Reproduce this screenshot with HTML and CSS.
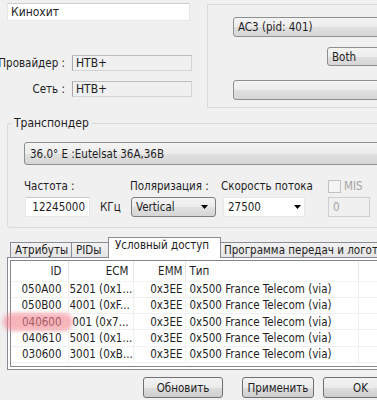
FILE: index.html
```html
<!DOCTYPE html>
<html lang="ru">
<head>
    <meta charset="UTF-8">
    <meta name="viewport" content="width=device-width, initial-scale=1.0">
    <title>Канал - Кинохит</title>
    <link rel="stylesheet" href="styles.css">
</head>
<body>

<div class="window">

    <section class="top">
        <div class="ident">
            <input class="name-input" type="text" value="Кинохит">
            <div class="info-row first">
                <span class="info-label">Провайдер :</span>
                <span class="info-field">НТВ+</span>
            </div>
            <div class="info-row">
                <span class="info-label">Сеть :</span>
                <span class="info-field">НТВ+</span>
            </div>
        </div>

        <div class="audio">
            <div class="combo audio-track">AC3 (pid: 401)</div>
            <div class="combo channels">Both</div>
            <div class="combo audio-bar"></div>
        </div>
    </section>

    <fieldset class="transponder">
        <legend>Транспондер</legend>
        <div class="combo satellite">36.0° E :Eutelsat 36A,36B</div>

        <div class="params">
            <div class="param">
                <span class="param-label">Частота :</span>
                <div class="param-line">
                    <input class="text-input freq" type="text" value="12245000">
                    <span class="unit">КГц</span>
                </div>
            </div>
            <div class="param">
                <span class="param-label">Поляризация :</span>
                <div class="combo polar">Vertical
                    <svg class="arrow" width="7" height="4" viewBox="0 0 7 4"><path d="M0 0h7L3.5 4z"/></svg>
                </div>
            </div>
            <div class="param">
                <span class="param-label">Скорость потока</span>
                <div class="edit-combo speed">27500
                    <svg class="arrow" width="7" height="4" viewBox="0 0 7 4"><path d="M0 0h7L3.5 4z"/></svg>
                </div>
            </div>
            <div class="param">
                <span class="param-label mis-label"><span class="check"></span>MIS</span>
                <input class="text-input mis" type="text" value="0" disabled>
            </div>
        </div>
    </fieldset>

    <nav class="tabs">
        <span class="tab tab-attr">Атрибуты</span>
        <span class="tab tab-pid">PIDы</span>
        <span class="tab active">Условный доступ</span>
        <span class="tab">Программа передач и логотип</span>
    </nav>

    <section class="tab-page">
        <div class="list">
            <table>
                <thead>
                    <tr>
                        <th class="col-id">ID</th>
                        <th class="col-ecm">ECM</th>
                        <th class="col-emm">EMM</th>
                        <th class="col-type">Тип</th>
                        <th></th>
                    </tr>
                </thead>
                <tbody id="ca-rows"></tbody>
            </table>
        </div>
    </section>

    <div class="actions">
        <button class="btn refresh">Обновить</button>
        <button class="btn apply">Применить</button>
        <button class="btn ok">OK</button>
    </div>

    <!-- marker stroke over the third id -->
    <div class="marker"></div>
</div>

<script>
    const caSystems = [
        { id: '050A00', ecm: '5201 (0x1...', emm: '0x3EE', type: '0x500 France Telecom (via)' },
        { id: '050B00', ecm: '4001 (0xF...', emm: '0x3EE', type: '0x500 France Telecom (via)' },
        { id: '040600', ecm: '001 (0x7...', emm: '0x3EE', type: '0x500 France Telecom (via)' },
        { id: '040610', ecm: '5001 (0x1...', emm: '0x3EE', type: '0x500 France Telecom (via)' },
        { id: '030600', ecm: '3001 (0xB...', emm: '0x3EE', type: '0x500 France Telecom (via)' }
    ];

    const tbody = document.getElementById('ca-rows');
    caSystems.forEach(item => {
        const row = document.createElement('tr');
        row.innerHTML = `
            <td class="col-id">${item.id}</td>
            <td class="col-ecm">${item.ecm}</td>
            <td class="col-emm">${item.emm}</td>
            <td class="col-type">${item.type}</td>
            <td></td>
        `;
        tbody.appendChild(row);
    });
</script>

</body>
</html>
```

FILE: styles.css
```css
body {
    margin: 0;
    width: 377px;
    height: 400px;
    overflow: hidden;
    background-color: #f0f0f0;
    font-family: "DejaVu Sans Condensed", "Liberation Sans", sans-serif;
    font-size: 11.5px;
    color: #1e1e1e;
}
.window {
    position: relative;
    width: 440px;
}

/* top block */
.top {
    display: flex;
    height: 108px;
}
.ident {
    width: 207px;
    padding-top: 3px;
}
.name-input {
    display: block;
    margin-left: 7px;
    width: 183px;
    height: 18px;
    box-sizing: border-box;
    border: 1px solid #e6e6e6;
    border-top-color: #cfcfcf;
    background-color: #fff;
    font: inherit;
    font-size: 12px;
    color: #1e1e1e;
    padding: 0 3px;
    outline: none;
}
.info-row {
    display: flex;
    align-items: center;
    margin-top: 10px;
}
.info-row.first {
    margin-top: 34px;
}
.info-label {
    display: flex;
    justify-content: flex-end;
    width: 65px;
    margin-right: 7px;
    white-space: nowrap;
}
.info-field {
    width: 120px;
    height: 16px;
    box-sizing: border-box;
    border: 1px solid #d4d4d4;
    border-left-color: #a9a9a9;
    border-top-color: #bdbdbd;
    padding-left: 3px;
    line-height: 14px;
    font-size: 12px;
}
.audio {
    flex: 1;
    margin-top: 4px;
    height: 104px;
    box-sizing: border-box;
    border: 1px solid #dadada;
    border-right: none;
    padding: 12px 0 0 25px;
}

/* drop-down lists */
.combo {
    display: flex;
    align-items: center;
    box-sizing: border-box;
    border: 1px solid #8e8f8f;
    border-radius: 3px;
    background: linear-gradient(#f4f4f4, #ececec 50%, #e0e0e0 51%, #d6d6d6);
    padding: 0 4px;
    white-space: nowrap;
}
.audio-track {
    width: 200px;
    height: 20px;
}
.channels {
    margin: 10px 0 0 94px;
    width: 90px;
    height: 19px;
}
.audio-bar {
    margin-top: 14px;
    width: 200px;
    height: 20px;
}
.arrow {
    margin-left: auto;
    margin-right: 3px;
    fill: #000;
}

/* transponder group */
.transponder {
    margin: 8px 0 0 7px;
    padding: 0 0 10px 16px;
    border: 1px solid #d5dbe0;
    border-radius: 3px;
    min-width: 0;
}
.transponder legend {
    margin-left: -12px;
    padding: 0 2px;
    line-height: 14px;
    font-size: 12px;
}
.satellite {
    margin-top: 12px;
    width: 420px;
    height: 23px;
    padding-left: 5px;
}
.params {
    display: grid;
    grid-template-columns: 106px 91px 106px 60px;
    margin-top: 13px;
}
.param {
    display: flex;
    flex-direction: column;
    gap: 3px;
}
.param-label {
    height: 16px;
    line-height: 16px;
    white-space: nowrap;
}
.param-line {
    display: flex;
    align-items: center;
}
.text-input {
    height: 20px;
    box-sizing: border-box;
    border: 1px solid #e3e9ef;
    border-top-color: #c5c9ce;
    background-color: #fff;
    font: inherit;
    color: #1e1e1e;
    outline: none;
}
.freq {
    margin-left: 1px;
    width: 65px;
    text-align: right;
    padding: 0 4px 0 0;
}
.unit {
    margin-left: 10px;
}
.polar {
    margin-left: 1px;
    width: 85px;
    height: 20px;
    border-color: #7f7f7f;
}
.edit-combo {
    display: flex;
    align-items: center;
    margin-left: 2px;
    width: 82px;
    height: 20px;
    box-sizing: border-box;
    border: 1px solid #e3e9ef;
    background-color: #fff;
    padding-left: 4px;
}
.mis-label {
    display: flex;
    align-items: center;
    gap: 3px;
    color: #a3a3a3;
    margin-left: 1px;
}
.check {
    width: 13px;
    height: 13px;
    box-sizing: border-box;
    border: 1px solid #c2c2c2;
    background-color: #f4f4f4;
}
.mis {
    margin-left: 1px;
    width: 42px;
    border: 1px solid #cfcfcf;
    background-color: #f0f0f0;
    color: #a3a3a3;
    padding-left: 4px;
}

/* tabs */
.tabs {
    display: flex;
    align-items: flex-end;
    margin-top: 9px;
    padding-left: 10px;
    height: 20px;
}
.tab {
    position: relative;
    height: 15px;
    box-sizing: border-box;
    border: 1px solid #898c95;
    border-bottom: none;
    margin-right: -1px;
    padding: 0 4px;
    line-height: 14px;
    background: linear-gradient(#f2f2f2, #e4e4e4);
    white-space: nowrap;
}
.tab-attr {
    width: 62px;
}
.tab-pid {
    width: 40px;
}
.tab.active {
    z-index: 1;
    width: 113px;
    height: 21px;
    margin: 0 -2px -1px -2px;
    padding: 0 6px;
    line-height: 15px;
    background: #fff;
}
.tab-page {
    margin-left: 7px;
    height: 113px;
    box-sizing: border-box;
    border: 1px solid #898c95;
    background-color: #fff;
    padding: 2px;
}
.list {
    height: 107px;
    box-sizing: border-box;
    border: 1px solid #828790;
    overflow: hidden;
}
.list table {
    border-collapse: collapse;
    table-layout: fixed;
    width: 440px;
}
.list th,
.list td {
    box-sizing: border-box;
    white-space: nowrap;
    overflow: hidden;
}
.list th {
    height: 20px;
    font-weight: normal;
    border-right: 1px solid #e5e5e5;
    border-bottom: 1px solid #f3f3f3;
}
.list td {
    height: 16.3px;
    padding-top: 0;
    padding-bottom: 0;
    border-right: 1px solid #f0f0f0;
    border-bottom: 1px solid #f0f0f0;
}
.col-id {
    width: 57px;
    text-align: right;
    padding-right: 6px;
}
.col-ecm {
    width: 65px;
    text-align: right;
    padding-right: 4px;
}
.col-emm {
    width: 52px;
    text-align: right;
    padding-right: 2px;
}
.col-type {
    width: 173px;
    text-align: left;
    padding-left: 4px;
}

/* buttons */
.actions {
    display: flex;
    margin-top: 7px;
    padding-left: 143px;
}
.btn {
    height: 21px;
    box-sizing: border-box;
    border: 1px solid #707070;
    border-radius: 3px;
    background: linear-gradient(#f2f2f2, #ebebeb 50%, #dddddd 51%, #cfcfcf);
    font: inherit;
    color: #1e1e1e;
    padding: 0;
}
.refresh {
    width: 80px;
}
.apply {
    width: 72px;
    margin-left: 19px;
}
.ok {
    width: 75px;
    margin-left: 9px;
}

.marker {
    position: absolute;
    left: 3px;
    top: 313px;
    width: 70px;
    height: 18px;
    border-radius: 9px;
    background-color: rgba(244, 130, 142, 0.6);
    filter: blur(2px);
}
```
